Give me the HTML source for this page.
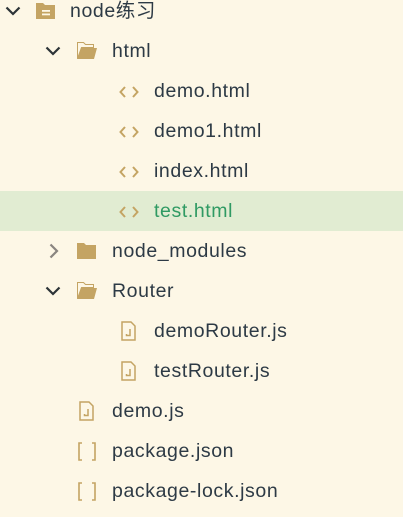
<!DOCTYPE html>
<html><head><meta charset="utf-8"><style>
html,body{margin:0;padding:0;width:403px;height:517px;background:#fdf7e6;overflow:hidden}
.r{position:absolute;left:0;width:403px;height:40px;font-family:"Liberation Sans","Noto Sans CJK SC",sans-serif;font-size:19.5px;letter-spacing:0.6px;color:#2d3a45}
.r span.t{position:absolute;top:9px;line-height:23px}
.r svg{position:absolute}
.sel{background:#e1ecd2}
.sel span.t{color:#2f9a63}
</style></head><body>

<div class="r" style="top:-9px">
<svg style="left:5px;top:14px" width="16" height="12" viewBox="0 0 16 12"><path d="M1.5 2.5 L8 9 L14.5 2.5" fill="none" stroke="#2d3438" stroke-width="2.2"/></svg>
<svg style="left:36px;top:11px" width="19" height="17" viewBox="0 0 19 17"><path d="M0 1h7l2 2h10v14H0z" fill="#c4a463"/><rect x="6" y="8" width="8" height="1.8" fill="#fdf7e6"/><rect x="6" y="11.5" width="8" height="1.8" fill="#fdf7e6"/></svg>
<span class="t" style="left:70px">node练习</span></div>

<div class="r" style="top:31px">
<svg style="left:45px;top:14px" width="16" height="12" viewBox="0 0 16 12"><path d="M1.5 2.5 L8 9 L14.5 2.5" fill="none" stroke="#2d3438" stroke-width="2.2"/></svg>
<svg style="left:77px;top:11px" width="20" height="17" viewBox="0 0 20 17"><path d="M0.5 0.5h6l2 2h8v3H4.5l-4 11z" fill="none" stroke="#c4a463" stroke-width="1"/><path d="M4 6h16l-3 11H0z" fill="#c4a463"/></svg>
<span class="t" style="left:112px">html</span></div>

<div class="r" style="top:71px"><svg style="left:119px;top:15px" width="20" height="12" viewBox="0 0 20 12"><path d="M6 1L1.5 6L6 11M14 1L18.5 6L14 11" fill="none" stroke="#c4a463" stroke-width="2"/></svg><span class="t" style="left:154px">demo.html</span></div>
<div class="r" style="top:111px"><svg style="left:119px;top:15px" width="20" height="12" viewBox="0 0 20 12"><path d="M6 1L1.5 6L6 11M14 1L18.5 6L14 11" fill="none" stroke="#c4a463" stroke-width="2"/></svg><span class="t" style="left:154px">demo1.html</span></div>
<div class="r" style="top:151px"><svg style="left:119px;top:15px" width="20" height="12" viewBox="0 0 20 12"><path d="M6 1L1.5 6L6 11M14 1L18.5 6L14 11" fill="none" stroke="#c4a463" stroke-width="2"/></svg><span class="t" style="left:154px">index.html</span></div>
<div class="r sel" style="top:191px"><svg style="left:119px;top:15px" width="20" height="12" viewBox="0 0 20 12"><path d="M6 1L1.5 6L6 11M14 1L18.5 6L14 11" fill="none" stroke="#c4a463" stroke-width="2"/></svg><span class="t" style="left:154px">test.html</span></div>

<div class="r" style="top:231px">
<svg style="left:48px;top:12px" width="12" height="16" viewBox="0 0 12 16"><path d="M2.5 1.5 L9 8 L2.5 14.5" fill="none" stroke="#8a8580" stroke-width="2.2"/></svg>
<svg style="left:77px;top:12px" width="19" height="16" viewBox="0 0 19 16"><path d="M0 0h7l2 2h10v14H0z" fill="#c4a463"/></svg>
<span class="t" style="left:112px">node_modules</span></div>

<div class="r" style="top:271px">
<svg style="left:45px;top:14px" width="16" height="12" viewBox="0 0 16 12"><path d="M1.5 2.5 L8 9 L14.5 2.5" fill="none" stroke="#2d3438" stroke-width="2.2"/></svg>
<svg style="left:77px;top:11px" width="20" height="17" viewBox="0 0 20 17"><path d="M0.5 0.5h6l2 2h8v3H4.5l-4 11z" fill="none" stroke="#c4a463" stroke-width="1"/><path d="M4 6h16l-3 11H0z" fill="#c4a463"/></svg>
<span class="t" style="left:112px">Router</span></div>

<div class="r" style="top:311px"><svg style="left:121px;top:10px" width="15" height="20" viewBox="0 0 15 20"><path d="M1 1h9l4 4v14H1z" fill="none" stroke="#c4a463" stroke-width="1.5"/><path d="M9 8v6.5H5.5v-1.5" fill="none" stroke="#c4a463" stroke-width="1.5"/></svg><span class="t" style="left:154px">demoRouter.js</span></div>
<div class="r" style="top:351px"><svg style="left:121px;top:10px" width="15" height="20" viewBox="0 0 15 20"><path d="M1 1h9l4 4v14H1z" fill="none" stroke="#c4a463" stroke-width="1.5"/><path d="M9 8v6.5H5.5v-1.5" fill="none" stroke="#c4a463" stroke-width="1.5"/></svg><span class="t" style="left:154px">testRouter.js</span></div>

<div class="r" style="top:391px"><svg style="left:79px;top:10px" width="15" height="20" viewBox="0 0 15 20"><path d="M1 1h9l4 4v14H1z" fill="none" stroke="#c4a463" stroke-width="1.5"/><path d="M9 8v6.5H5.5v-1.5" fill="none" stroke="#c4a463" stroke-width="1.5"/></svg><span class="t" style="left:112px">demo.js</span></div>
<div class="r" style="top:431px"><svg style="left:77px;top:11px" width="20" height="19" viewBox="0 0 20 19"><path d="M5 1H2v17h3M15 1h3v17h-3" fill="none" stroke="#c4a463" stroke-width="1.6"/></svg><span class="t" style="left:112px">package.json</span></div>
<div class="r" style="top:471px"><svg style="left:77px;top:11px" width="20" height="19" viewBox="0 0 20 19"><path d="M5 1H2v17h3M15 1h3v17h-3" fill="none" stroke="#c4a463" stroke-width="1.6"/></svg><span class="t" style="left:112px">package-lock.json</span></div>

</body></html>
